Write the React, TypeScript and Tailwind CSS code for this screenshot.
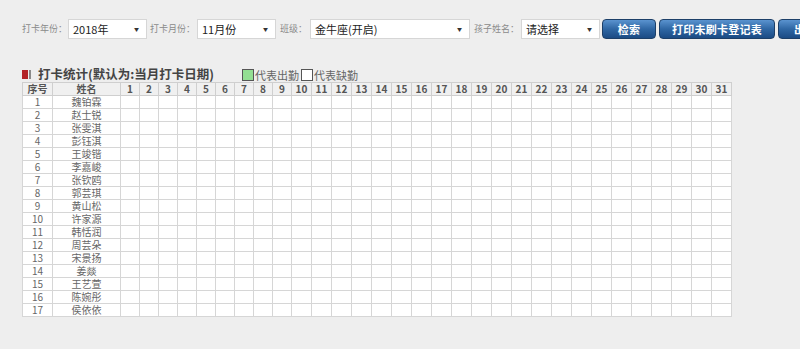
import { ReactNode } from 'react';

const names = [
  '魏铂霖', '赵士锐', '张雯淇', '彭钰淇', '王竣锴', '李嘉峻', '张钦鸥', '郭芸琪', '黄山松',
  '许家源', '韩恬润', '周芸朵', '宋景扬', '姜燚', '王艺萱', '陈婉彤', '侯依依',
];

const days = Array.from({ length: 31 }, (_, i) => i + 1);

function Label({ children, width }: { children: ReactNode; width: string }) {
  return (
    <span className={`${width} block shrink-0 text-[9px] text-[#8a8a8a] leading-none -mt-[1px]`}>
      {children}
    </span>
  );
}

function FakeSelect({ value, width }: { value: string; width: string }) {
  return (
    <div
      className={`${width} shrink-0 h-[20px] bg-white border border-[#d6d6d6] flex items-center justify-between pl-[4px] pr-[7px] text-[11px] text-[#222]`}
    >
      <span>{value}</span>
      <span className="text-[5px] text-[#333]">▼</span>
    </div>
  );
}

function BlueButton({ children, width, className = '' }: { children: ReactNode; width: string; className?: string }) {
  return (
    <button
      className={`${width} ${className} h-[20px] shrink-0 rounded-[4px] border border-[#1c3f68] bg-gradient-to-b from-[#5a93cf] via-[#2f67a4] to-[#1b4b84] text-white text-[11px] font-bold tracking-wide`}
    >
      {children}
    </button>
  );
}

export default function App() {
  return (
    <div
      className="w-[800px] h-[349px] overflow-hidden bg-[#eeeeee] pl-[22px] pt-[19px]"
      style={{ fontFamily: '"Noto Sans CJK SC", "Noto Sans", sans-serif' }}
    >
      {/* Filter bar */}
      <div className="flex items-center whitespace-nowrap w-[900px] h-[20px]">
        <Label width="w-[46px]">打卡年份：</Label>
        <FakeSelect value="2018年" width="w-[79px]" />
        <div className="ml-[3px]">
          <Label width="w-[47px]">打卡月份：</Label>
        </div>
        <FakeSelect value="11月份" width="w-[79px]" />
        <div className="ml-[4px]">
          <Label width="w-[30px]">班级：</Label>
        </div>
        <FakeSelect value="金牛座(开启)" width="w-[160px]" />
        <div className="ml-[4px]">
          <Label width="w-[47px]">孩子姓名：</Label>
        </div>
        <FakeSelect value="请选择" width="w-[79px]" />
        <div className="ml-[2px] flex gap-[3px]">
          <BlueButton width="w-[54px]">检索</BlueButton>
          <BlueButton width="w-[116px]">打印未刷卡登记表</BlueButton>
          <BlueButton width="w-[90px]" className="text-left pl-[15px]">出勤统计</BlueButton>
        </div>
      </div>

      {/* Section title */}
      <div className="flex items-end mt-[26px] h-[16px]">
        <div className="flex items-center gap-[1px] mb-[2px]">
          <div className="w-[6px] h-[9px] bg-[#b32428]" />
          <div className="w-[2px] h-[9px] bg-[#8a8a8a]" />
        </div>
        <span className="ml-[7px] text-[12.5px] font-bold text-[#444] leading-none mb-[1px]">
          打卡统计(默认为:当月打卡日期)
        </span>
        <div className="ml-[28px] flex items-end text-[11px] text-[#666] leading-none">
          <div className="w-[12px] h-[12px] bg-[#93df93] border border-[#555]" />
          <span className="ml-[1px]">代表出勤</span>
          <div className="ml-[2px] w-[12px] h-[12px] bg-white border border-[#555]" />
          <span className="ml-[1px]">代表缺勤</span>
        </div>
      </div>

      {/* Attendance table */}
      <table className="mt-[1px] table-fixed border-collapse w-[707px] bg-white text-[10px] text-[#666]">
        <colgroup>
          <col className="w-[30px]" />
          <col className="w-[68px]" />
          {days.map((d) => (
            <col key={d} className={d < 10 ? 'w-[19px]' : 'w-[20px]'} />
          ))}
        </colgroup>
        <thead>
          <tr className="bg-[#f0f0f0] h-[13px]">
            <th className="border border-[#cfcfcf] p-0 leading-[12px] font-bold text-[#555]">序号</th>
            <th className="border border-[#cfcfcf] p-0 leading-[12px] font-bold text-[#555]">姓名</th>
            {days.map((d) => (
              <th key={d} className="border border-[#cfcfcf] p-0 leading-[12px] font-bold text-[10px] text-[#555]">
                {d}
              </th>
            ))}
          </tr>
        </thead>
        <tbody>
          {names.map((name, i) => (
            <tr key={name} className="h-[13px]">
              <td className="border border-[#d6d6d6] p-0 text-center leading-[12px]">{i + 1}</td>
              <td className="border border-[#d6d6d6] p-0 text-center leading-[12px]">{name}</td>
              {days.map((d) => (
                <td key={d} className="border border-[#d6d6d6] p-0" />
              ))}
            </tr>
          ))}
        </tbody>
      </table>
    </div>
  );
}
